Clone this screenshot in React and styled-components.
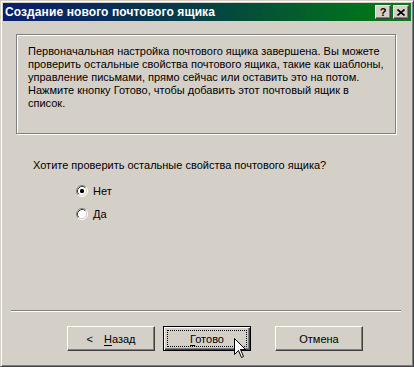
import styled, { createGlobalStyle } from "styled-components";

const GlobalStyle = createGlobalStyle`
  html, body {
    margin: 0;
    padding: 0;
    background: #d4d0c8;
  }
  * {
    box-sizing: border-box;
  }
`;

const Window = styled.div`
  position: relative;
  width: 414px;
  height: 367px;
  display: flex;
  flex-direction: column;
  padding: 2px;
  background: #d4d0c8;
  border: 1px solid;
  border-color: #d4d0c8 #404040 #404040 #d4d0c8;
  box-shadow: inset 1px 1px #fff, inset -1px -1px #808080;
  font-family: "Liberation Sans", Arial, sans-serif;
  font-size: 11px;
  color: #000;
`;

const TitleBar = styled.div`
  height: 18px;
  display: flex;
  align-items: center;
  padding: 0 2px 0 2px;
  background: linear-gradient(to right, #0a1e6e 0%, #063c48 45%, #008010 100%);
`;

const Title = styled.div`
  flex: 1;
  color: #fff;
  font-weight: bold;
  font-size: 12px;
  letter-spacing: 0.1px;
  white-space: nowrap;
`;

const CaptionButton = styled.div`
  width: 16px;
  height: 14px;
  margin-left: ${(p) => (p.$gap ? "2px" : "0")};
  display: flex;
  align-items: center;
  justify-content: center;
  background: #d4d0c8;
  border: 1px solid;
  border-color: #fff #404040 #404040 #fff;
  box-shadow: inset -1px -1px #808080;
  font-weight: bold;
  font-size: 11px;
  line-height: 1;
  color: #000;
`;

const Body = styled.div`
  flex: 1;
  display: flex;
  flex-direction: column;
`;

const InfoPanel = styled.div`
  margin: 13px 0 0 13px;
  width: 380px;
  height: 100px;
  padding: 10px 8px 0 11px;
  border: 1px solid #808080;
  box-shadow: inset 1px 1px #fff, 1px 1px #fff;
  line-height: 13px;
`;

const Question = styled.div`
  margin: 25px 0 0 30px;
  line-height: 13px;
`;

const RadioGroup = styled.div`
  margin: 11px 0 0 73px;
  display: flex;
  flex-direction: column;
  gap: 7px;
`;

const RadioRow = styled.label`
  height: 16px;
  display: flex;
  align-items: center;
  gap: 5px;
`;

const Spacer = styled.div`
  flex: 1;
`;

const Separator = styled.div`
  margin: 0 10px 0 8px;
  height: 2px;
  border-top: 1px solid #808080;
  border-bottom: 1px solid #fff;
`;

const ButtonRow = styled.div`
  display: flex;
  margin: 14px 0 13px 64px;
`;

const Button = styled.div`
  width: 88px;
  height: 25px;
  margin-right: ${(p) => p.$mr || 0}px;
  display: flex;
  align-items: center;
  justify-content: center;
  background: #d4d0c8;
  border: 1px solid;
  border-color: ${(p) => (p.$default ? "#000" : "#fff #404040 #404040 #fff")};
  box-shadow: ${(p) =>
    p.$default
      ? "inset 1px 1px #fff, inset -1px -1px #404040, inset -2px -2px #808080"
      : "inset -1px -1px #808080"};
  padding: 3px;
`;

const Focus = styled.div`
  width: 100%;
  height: 100%;
  display: flex;
  align-items: center;
  justify-content: center;
  border: 1px dotted ${(p) => (p.$on ? "#000" : "transparent")};
`;

const Underline = styled.span`
  text-decoration: underline;
  text-underline-offset: 2px;
`;

const Lt = styled.span`
  margin-right: 11px;
`;

const Cursor = styled.svg`
  position: absolute;
  left: 233px;
  top: 337px;
`;

const Radio = ({ checked }) => (
  <svg width="12" height="12" viewBox="0 0 12 12">
    <circle cx="6" cy="6" r="5" fill="#fff" />
    <path d="M2.11 9.89 A5.5 5.5 0 0 1 9.89 2.11" fill="none" stroke="#808080" />
    <path d="M9.89 2.11 A5.5 5.5 0 0 1 2.11 9.89" fill="none" stroke="#fff" />
    <path d="M2.82 9.18 A4.5 4.5 0 0 1 9.18 2.82" fill="none" stroke="#404040" />
    <path d="M9.18 2.82 A4.5 4.5 0 0 1 2.82 9.18" fill="none" stroke="#d4d0c8" />
    {checked && <rect x="4" y="4" width="4" height="4" rx="1.5" fill="#000" />}
  </svg>
);

export default function App() {
  return (
    <>
      <GlobalStyle />
      <Window>
        <TitleBar>
          <Title>Создание нового почтового ящика</Title>
          <CaptionButton>?</CaptionButton>
          <CaptionButton $gap>
            <svg width="8" height="7" viewBox="0 0 8 7">
              <path d="M0.5 0.5 L7.5 6.5 M7.5 0.5 L0.5 6.5" stroke="#000" strokeWidth="1.6" />
            </svg>
          </CaptionButton>
        </TitleBar>
        <Body>
          <InfoPanel>
            Первоначальная настройка почтового ящика завершена. Вы можете
            проверить остальные свойства почтового ящика, такие как шаблоны,
            управление письмами, прямо сейчас или оставить это на потом.
            Нажмите кнопку Готово, чтобы добавить этот почтовый ящик в
            список.
          </InfoPanel>
          <Question>Хотите проверить остальные свойства почтового ящика?</Question>
          <RadioGroup>
            <RadioRow>
              <Radio checked />
              Нет
            </RadioRow>
            <RadioRow>
              <Radio />
              Да
            </RadioRow>
          </RadioGroup>
          <Spacer />
          <Separator />
          <ButtonRow>
            <Button $mr={8}>
              <Focus>
                <span>
                  <Lt>&lt;</Lt>
                  <Underline>Н</Underline>азад
                </span>
              </Focus>
            </Button>
            <Button $default $mr={24}>
              <Focus $on>
                <span>
                  <Underline>Г</Underline>отово
                </span>
              </Focus>
            </Button>
            <Button>
              <Focus>Отмена</Focus>
            </Button>
          </ButtonRow>
        </Body>
        <Cursor width="13" height="20" viewBox="0 0 13 20">
          <path
            d="M0.5 0.5 L0.5 16.5 L4.5 12.5 L7.5 19.5 L9.5 18.5 L6.5 11.5 L11.5 11.5 Z"
            fill="#fff"
            stroke="#000"
            strokeWidth="1"
          />
        </Cursor>
      </Window>
    </>
  );
}
